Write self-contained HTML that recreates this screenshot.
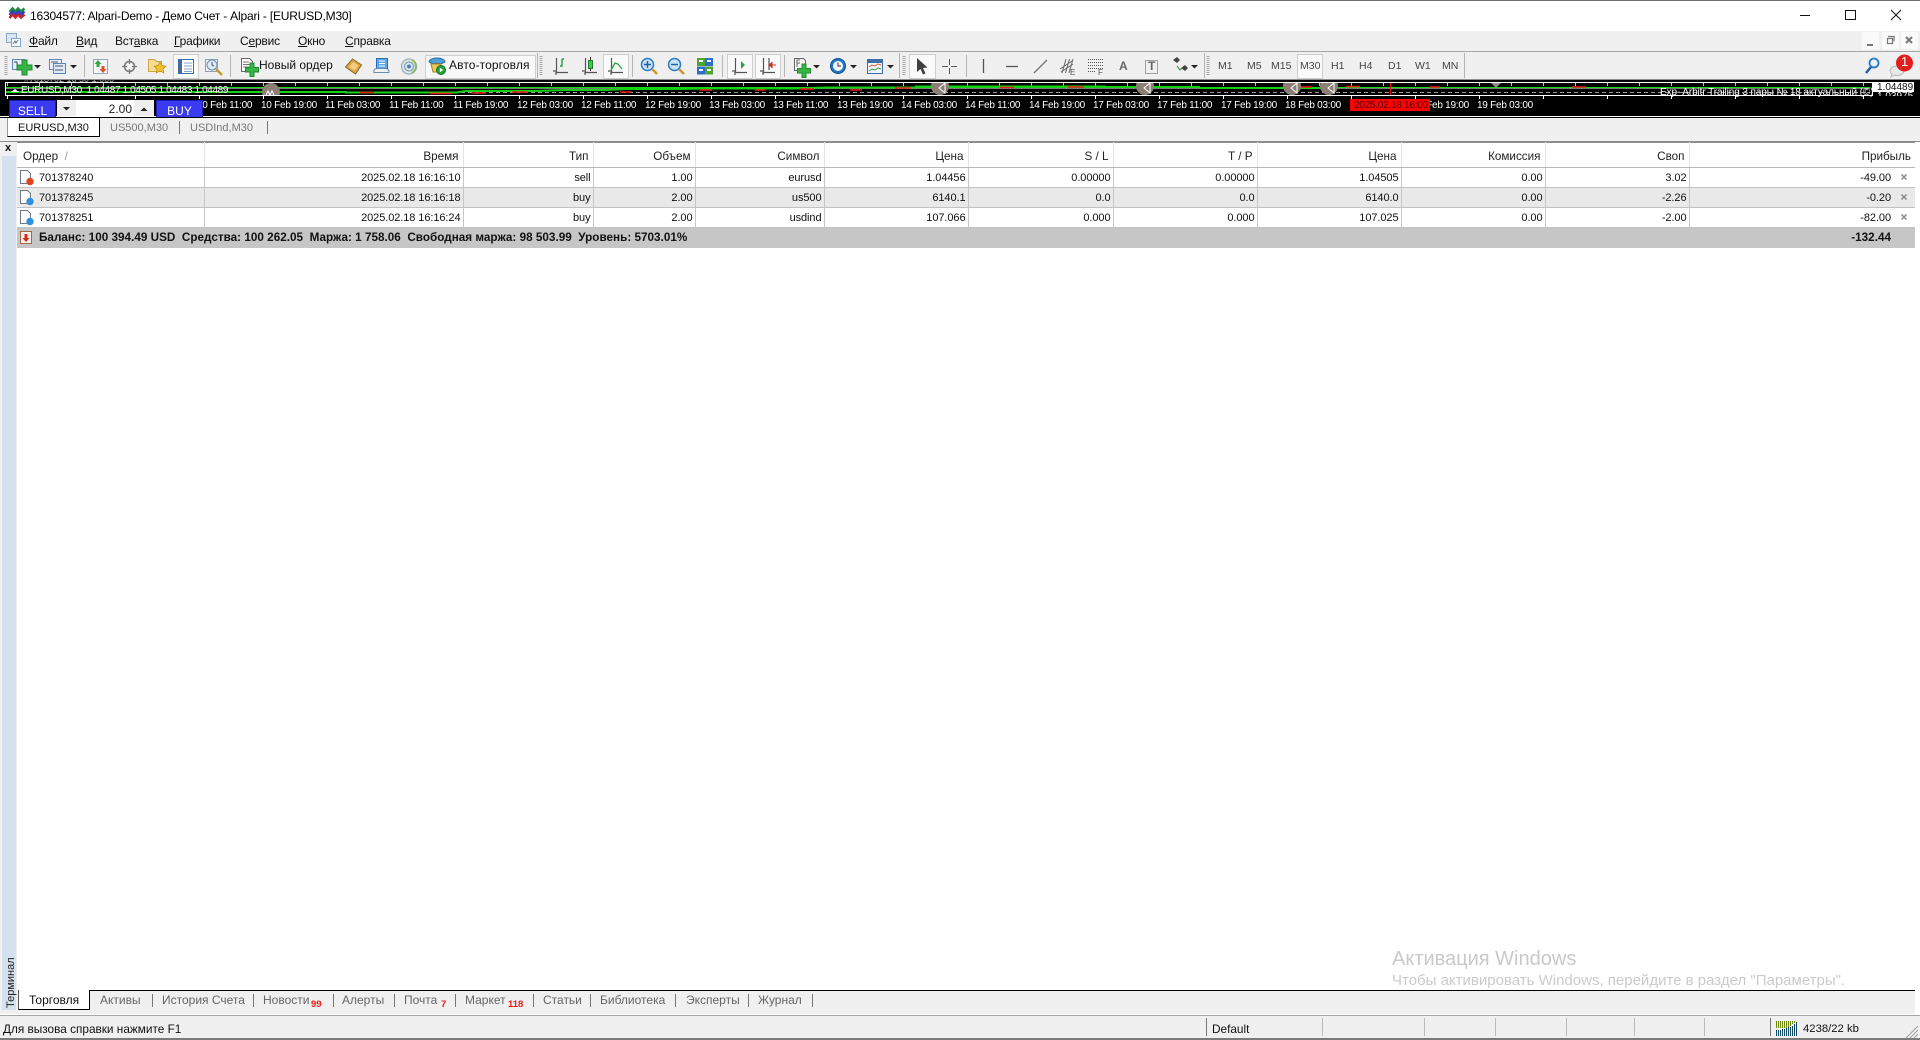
<!DOCTYPE html>
<html lang="ru"><head><meta charset="utf-8"><title>16304577: Alpari-Demo</title>
<style>
html,body{margin:0;padding:0;width:1920px;height:1040px;overflow:hidden;background:#fff;font-family:"Liberation Sans","Noto Sans CJK SC",sans-serif;font-size:11px;color:#000}
.a{position:absolute}
.t{position:absolute;white-space:nowrap;line-height:14px}
.menu .t{font-size:12px;top:34px;color:#111;letter-spacing:-.2px}
.tf .t{font-size:10.5px;top:59px;color:#444}
.ax .t{font-size:10px;top:99px;color:#fff;letter-spacing:-.25px}
.sep{position:absolute;width:1px;background:#b4b4b4}
table{position:absolute;left:17px;top:142px;border-collapse:collapse;table-layout:fixed;width:1898px;font-size:11px}
th{font-weight:400;font-size:11.7px;height:22px;padding:2px 4px 0 0;text-align:right;border-top:1px solid #8c8c8c;border-right:1px solid #e4e4e4;border-bottom:1px solid #b9b9b9;color:#222;white-space:nowrap;overflow:hidden}
td{height:19px;text-align:right;padding:0 2px 0 0;border-right:1px solid #c6c6c6;border-bottom:1px solid #c2c2c2;white-space:nowrap;overflow:hidden;color:#111;letter-spacing:-.08px}
td:first-child{text-align:left;padding-left:22px}
th:first-child{text-align:left;padding-left:6px}
tr.g td{background:#e9e9e9}
td:last-child{padding-right:24px;border-right:0}
th:last-child{border-right:0}
tr.tot td{background:#c6c6c6;font-weight:700;font-size:11.7px;height:19px;border:0;padding-right:24px;padding-bottom:1px;letter-spacing:.02px}
.bt .t{font-size:12px;top:993px;color:#666}
.bt .r{color:#f01818;font-size:9.5px;font-weight:700;top:998px}
.bs{position:absolute;top:1018px;height:18px;width:1px;background:#b9b9b9}
.tick{position:absolute;left:7px;width:1860px}
.st{font-size:11.8px;top:1022px;color:#111}
</style></head><body>

<!-- title bar -->
<div class="a" style="left:0;top:0;width:1920px;height:1px;background:#6f6f6f"></div>
<div class="t" style="left:30px;top:9px;font-size:12px;letter-spacing:-.19px">16304577: Alpari-Demo - Демо Счет - Alpari - [EURUSD,M30]</div>

<!-- menu -->
<div class="a" style="left:0;top:31px;width:1920px;height:20px;background:#f0f0f0"></div>
<div class="menu">
<div class="t" style="left:29px"><u>Ф</u>айл</div>
<div class="t" style="left:76px"><u>В</u>ид</div>
<div class="t" style="left:115px">Вст<u>а</u>вка</div>
<div class="t" style="left:174px"><u>Г</u>рафики</div>
<div class="t" style="left:240px">С<u>е</u>рвис</div>
<div class="t" style="left:298px"><u>О</u>кно</div>
<div class="t" style="left:345px"><u>С</u>правка</div>
</div>

<!-- toolbar -->
<div class="a" style="left:0;top:51px;width:1920px;height:1px;background:#a6a6a6"></div>
<div class="a" style="left:0;top:52px;width:1920px;height:27px;background:#f0f0f0"></div>
<div class="a" style="left:0;top:79px;width:1920px;height:1px;background:#8e8e8e"></div>

<div class="a" style="left:173px;top:54px;width:24px;height:23px;background:#fafafa;border:1px solid #cfcfcf"></div>
<div class="a" style="left:425px;top:55px;width:109px;height:22px;background:#f8f8f8;border:1px solid #cfcfcf"></div>
<div class="a" style="left:603px;top:54px;width:24px;height:23px;background:#fafafa;border:1px solid #cfcfcf"></div>
<div class="a" style="left:727px;top:54px;width:24px;height:23px;background:#fafafa;border:1px solid #cfcfcf"></div>
<div class="a" style="left:755px;top:54px;width:24px;height:23px;background:#fafafa;border:1px solid #cfcfcf"></div>
<div class="a" style="left:909px;top:54px;width:25px;height:23px;background:#fafafa;border:1px solid #cfcfcf"></div>
<div class="a" style="left:1297px;top:54px;width:24px;height:23px;background:#fafafa;border:1px solid #cfcfcf"></div>

<div class="sep" style="left:84px;top:55px;height:22px"></div>
<div class="sep" style="left:230px;top:55px;height:22px"></div>
<div class="sep" style="left:537px;top:53px;height:25px"></div>
<div class="sep" style="left:632px;top:55px;height:22px"></div>
<div class="sep" style="left:722px;top:55px;height:22px"></div>
<div class="sep" style="left:784px;top:55px;height:22px"></div>
<div class="sep" style="left:899px;top:53px;height:25px"></div>
<div class="sep" style="left:966px;top:55px;height:22px"></div>
<div class="sep" style="left:1204px;top:53px;height:25px"></div>
<div class="sep" style="left:1464px;top:53px;height:25px"></div>

<div class="t" style="left:259px;top:58px;font-size:12px;color:#111">Новый ордер</div>
<div class="t" style="left:449px;top:58px;font-size:12px;color:#111;letter-spacing:.1px">Авто-торговля</div>
<div class="tf">
<div class="t" style="left:1218px">M1</div>
<div class="t" style="left:1247px">M5</div>
<div class="t" style="left:1271px">M15</div>
<div class="t" style="left:1300px">M30</div>
<div class="t" style="left:1331px">H1</div>
<div class="t" style="left:1359px">H4</div>
<div class="t" style="left:1388px">D1</div>
<div class="t" style="left:1415px">W1</div>
<div class="t" style="left:1442px">MN</div>
</div>
<div class="t" style="left:1119px;top:59px;font-size:12px;font-weight:700;color:#666">A</div>
<div class="t" style="left:1148px;top:59px;font-size:12px;font-weight:700;color:#666">T</div>
<div class="t" style="left:1070px;top:66px;font-size:8px;color:#555">E</div>
<div class="t" style="left:1098px;top:66px;font-size:8px;color:#555">F</div>

<!-- MDI buttons -->
<div class="a" style="left:1862px;top:32px;width:17px;height:17px;background:#fafafa"></div>
<div class="a" style="left:1882px;top:32px;width:17px;height:17px;background:#fafafa"></div>
<div class="a" style="left:1901px;top:32px;width:17px;height:17px;background:#fafafa"></div>

<!-- chart strip -->
<div class="a" style="left:0;top:80px;width:1920px;height:38px;background:#000"></div>
<div class="a" style="left:0;top:116px;width:1920px;height:1px;background:#fff"></div>
<div class="a" style="left:5px;top:82px;width:1866px;height:12px;border:1px solid #fff"></div>
<div class="tick" style="top:83px;height:3px;background:repeating-linear-gradient(90deg,#bbb 0 1px,transparent 1px 32px)"></div>
<div class="tick" style="top:95px;height:4px;background:repeating-linear-gradient(90deg,#fff 0 1px,transparent 1px 64px)"></div>
<div class="a" style="left:24px;top:80px;height:3px;width:110px;overflow:hidden;font-size:9px;color:#bbb;line-height:9px;white-space:nowrap"><span style="position:relative;top:-5px">#7013702 16 50 1.000</span></div>

<svg class="a" style="left:0;top:0" width="1920" height="1040" viewBox="0 0 1920 1040" fill="none">
 <defs><clipPath id="fr"><rect x="6" y="83" width="1865" height="12"/></clipPath></defs>
 <!-- window controls -->
 <path d="M1800 15.500h10" stroke="#111"/>
 <rect x="1845.500" y="10.500" width="10" height="9" stroke="#111"/>
 <path d="M1891 10l10 10M1901 10l-10 10" stroke="#111"/>
 <!-- app logo -->
 <path d="M9.500 12l3-3.500 3 3 2.500-3 3 3 3.500-3" stroke="#1f8a3a" stroke-width="2.500"/>
 <path d="M9.500 15l3-3.500 3 3 2.500-3 3 3 3.500-3" stroke="#3040d0" stroke-width="2.500"/>
 <path d="M9.500 18l3-3.500 3 3 2.500-3 3 3 3.500-3" stroke="#c8242c" stroke-width="2.500"/>
 <!-- menu doc icon -->
 <rect x="6.500" y="33.500" width="10" height="9" fill="#dbe7f6" stroke="#8aa8ce"/>
 <rect x="11.500" y="38.500" width="9" height="8" fill="#fff" stroke="#7fa4d0"/>
 <path d="M13 44l2-3 1 2 2-3" stroke="#4a78b0"/>
 <!-- grips -->
 <path d="M6 56v20M541 56v20M904 56v20M1208 56v20" stroke="#a8a8a8" stroke-width="3" stroke-dasharray="1 1"/>
 <!-- new chart -->
 <rect x="12.500" y="59.500" width="12" height="10" fill="#e8f0fa" stroke="#5d86b8"/>
 <path d="M14 62h3M17 62v4M17 66h4" stroke="#445"/>
 <path d="M22 60v5h-5v5h5v5h5v-5h5v-5h-5v-5z" fill="#35b544" stroke="#1f8a2e"/>
 <path d="M34 65h7l-3.500 3.500z" fill="#222"/>
 <!-- profiles -->
 <rect x="49.500" y="59.500" width="12" height="10" fill="#e8f0fa" stroke="#5d86b8"/>
 <rect x="53.500" y="63.500" width="12" height="10" fill="#dce8f7" stroke="#5d86b8"/>
 <path d="M51 62h7M55 66h8M55 70h8" stroke="#556"/>
 <path d="M70 65h7l-3.500 3.500z" fill="#222"/>
 <!-- market watch -->
 <rect x="93.500" y="59.500" width="14" height="14" fill="#f6f8fb" stroke="#8fa9c9"/>
 <path d="M98 60l3.500 4h-2v3h-3v-3h-2z" fill="#2fa83c"/>
 <path d="M103 73l-3.500-4h2v-3h3v3h2z" fill="#e0552a"/>
 <!-- navigator -->
 <circle cx="129.500" cy="66.500" r="5" stroke="#777" stroke-width="1.500"/>
 <path d="M129.500 59v5M129.500 69v5M122 66.500h5M132 66.500h5" stroke="#777" stroke-width="1.300"/>
 <!-- folder star -->
 <path d="M148.500 59.500h6l2 2h5v10h-13z" fill="#f6dc8e" stroke="#c7a548"/>
 <path d="M160 62l2 3.500 4 .7-3 2.800.8 4-3.800-2-3.800 2 .8-4-3-2.800 4-.7z" fill="#f1c22c" stroke="#b88a15" stroke-width=".7"/>
 <!-- terminal -->
 <rect x="178.500" y="59.500" width="15" height="14" fill="#fff" stroke="#3e6da6"/>
 <rect x="179" y="60" width="3" height="13" fill="#3e6da6"/>
 <path d="M184 63h8M184 66h8M184 69h8M184 71.500h8" stroke="#87a4c7"/>
 <path d="M180 62v1M180 65.500v1M180 69v1" stroke="#e33"/>
 <!-- tester -->
 <rect x="205.500" y="59.500" width="12" height="12" fill="#eef3f8" stroke="#8c9fb5"/>
 <circle cx="212" cy="65" r="5" fill="#dcebf7" stroke="#6f8ba8"/>
 <path d="M212 62v3l2 1" stroke="#556"/>
 <path d="M216 69l6 6" stroke="#c99a2a" stroke-width="2.500"/>
 <!-- new order -->
 <path d="M241.500 58.500h8l3 3v10h-11z" fill="#fff" stroke="#666"/>
 <path d="M243 62h6M243 64.500h7M243 67h6" stroke="#777"/>
 <path d="M250 63v4.500h-4.500v4.500h4.500v4.500h4v-4.500h4.500v-4.500h-4.500v-4.500z" fill="#35b544" stroke="#1f8a2e"/>
 <!-- book -->
 <path d="M345.500 67l7-8 9 6-6 9z" fill="#d9a648" stroke="#8e6a22"/>
 <path d="M349 67l4.500-5 5 3.500-4 5z" fill="#f2cf7e"/>
 <!-- vps -->
 <rect x="376.500" y="58.500" width="11" height="11" fill="#5aa6ea" stroke="#2e70b8"/>
 <path d="M379 61h6M379 63.500h6M379 66h6" stroke="#fff"/>
 <path d="M374 72.500a3 3 0 0 1 3-4h8a3.500 3.500 0 0 1 4 4z" fill="#eef2f7" stroke="#6f8ba8"/>
 <!-- signal -->
 <circle cx="409" cy="66.500" r="7.500" fill="#dfe9ee" stroke="#97b0bd" stroke-width="1.300"/>
 <circle cx="409" cy="66.500" r="4.500" stroke="#7d9db8" stroke-width="1.200"/>
 <circle cx="409" cy="66.500" r="2" fill="#4a80b8"/>
 <path d="M412 60a7.500 7.500 0 0 1 3 10l-3 3" stroke="#86b94a" stroke-width="1.600"/>
 <!-- autotrade -->
 <path d="M429 62a8 4 0 0 1 16 0l-3 1.500h-10z" fill="#4f9fd8" stroke="#2c6a9e"/>
 <path d="M431 64h10l-1 8h-7z" fill="#eec75c" stroke="#a88420"/>
 <circle cx="441" cy="70" r="4.500" fill="#25a03a" stroke="#17752a"/>
 <path d="M439.800 67.800l3.500 2.200-3.500 2.200z" fill="#fff"/>
 <!-- chart types -->
 <path d="M556.500 58v14.500H568M553 71h3M556 75v-3" stroke="#555" stroke-width="1.200"/>
 <path d="M562 59v7h-2M562 59h2" stroke="#1fa03a" stroke-width="1.400"/>
 <path d="M585.500 58v14.500H597M582 71h3M585 75v-3" stroke="#555" stroke-width="1.200"/>
 <rect x="588.500" y="60.500" width="4" height="8" fill="#35d04a" stroke="#1f7a2e"/>
 <path d="M590.500 57v3M590.500 69v2" stroke="#333"/>
 <path d="M611.500 58v14.500H623M608 71h3M611 75v-3" stroke="#555" stroke-width="1.200"/>
 <path d="M611 70l4-7 3 1 4 5" stroke="#2aa045" stroke-width="1.300"/>
 <!-- zoom -->
 <circle cx="647.500" cy="64.500" r="6" fill="#c8e2f8" stroke="#2c7cc8" stroke-width="1.500"/>
 <path d="M644 64.500h7M647.500 61v7" stroke="#1f5fa8" stroke-width="1.500"/>
 <path d="M652 69l5 5" stroke="#c99a2a" stroke-width="2.500"/>
 <circle cx="674.500" cy="64.500" r="6" fill="#c8e2f8" stroke="#2c7cc8" stroke-width="1.500"/>
 <path d="M671 64.500h7" stroke="#1f5fa8" stroke-width="1.500"/>
 <path d="M679 69l5 5" stroke="#c99a2a" stroke-width="2.500"/>
 <!-- tile -->
 <rect x="697" y="58" width="8" height="8" fill="#4fa52f"/><rect x="705" y="58" width="8" height="8" fill="#2c70c8"/>
 <rect x="697" y="66.500" width="8" height="8" fill="#2c70c8"/><rect x="705" y="66.500" width="8" height="8" fill="#4fa52f"/>
 <path d="M699 61h4M707 61h4M699 70h4M707 70h4" stroke="#fff" stroke-width="2"/>
 <!-- autoscroll / shift -->
 <path d="M735.500 58v14.500H747M732 71h3M735 75v-3" stroke="#555" stroke-width="1.200"/>
 <path d="M741 61l4 4-4 4z" fill="#2aa045"/>
 <path d="M763.500 58v14.500H775M760 71h3M763 75v-3M769 58v12" stroke="#555" stroke-width="1.200"/>
 <path d="M771 65h5M772 62.500l-3 2.500 3 2.500z" stroke="#c8342c" fill="#c8342c"/>
 <!-- add indicator -->
 <path d="M794.500 58.500h9l2 2v10h-11z" fill="#f6f6f6" stroke="#666"/>
 <path d="M797 63v-3h3M800 63h-3v4" stroke="#666"/>
 <path d="M802 64v4.500h-4.500v4.500h4.500v4.500h4v-4.500h4.500v-4.500h-4.500v-4.500z" fill="#35b544" stroke="#1f8a2e"/>
 <path d="M813 65h7l-3.500 3.500z" fill="#222"/>
 <!-- clock -->
 <circle cx="838" cy="66" r="7.500" fill="#1f78c8" stroke="#124f8e"/>
 <circle cx="838" cy="66" r="5" fill="#f4f7fa"/>
 <path d="M838 62.500v3.500h3" stroke="#333"/>
 <path d="M850 65h7l-3.500 3.500z" fill="#222"/>
 <!-- template -->
 <rect x="867.500" y="59.500" width="15" height="14" fill="#eef4fb" stroke="#3e6da6"/>
 <rect x="868" y="60" width="14" height="3" fill="#3e6da6"/>
 <path d="M869 67l3-2 3 1 3-2 3 1" stroke="#d85a2a"/>
 <path d="M869 71l3-2 3 1 3-2 3 1" stroke="#3a9a3a"/>
 <path d="M887 65h7l-3.500 3.500z" fill="#222"/>
 <!-- cursor -->
 <path d="M917 58v14l3.500-3 2.500 5.500 2.500-1-2.500-5.500 4.500-.5z" fill="#3f3f3f"/>
 <!-- crosshair -->
 <path d="M949.500 59v6M949.500 68v6M942 66.500h6M951 66.500h6" stroke="#555"/>
 <!-- lines -->
 <path d="M983.500 59v14" stroke="#555" stroke-width="1.300"/>
 <path d="M1006 66.500h12" stroke="#555" stroke-width="1.300"/>
 <path d="M1034 73l13-13" stroke="#777" stroke-width="1.300"/>
 <path d="M1060 69l12-8M1061 72l12-8M1066 59l-4 14M1069.500 59l-4 14M1073 59l-4 14" stroke="#666"/>
 <path d="M1088 59.500h15M1088 62.500h15M1088 65.500h15M1088 68.500h15M1088 71.500h7" stroke="#555" stroke-dasharray="1 1"/>
 <path d="M1145.500 60.500h12v13h-12z" stroke="#555" stroke-dasharray="1 1"/>
 <path d="M1173 60l4-3 3 3-3 3z M1181 68l4-3 3 3-3 3z" fill="#444"/>
 <path d="M1177 66l3 4 2-2" stroke="#2a8a3a"/>
 <path d="M1191 65h7l-3.500 3.500z" fill="#222"/>
 <!-- search -->
 <circle cx="1874" cy="63" r="4.500" stroke="#2c78c8" stroke-width="1.800" fill="#e8f2fb"/>
 <path d="M1871 67l-5 6" stroke="#1f5fa8" stroke-width="2.500"/>
 <!-- chat + badge -->
 <path d="M1890 71a7 5 0 0 1 14 0 7 5 0 0 1-10 4l-3 2 1-3a5 5 0 0 1-2-3z" fill="#e8e8e8" stroke="#bbb"/>
 <circle cx="1904.500" cy="63" r="8.500" fill="#e01f1f"/>
 <!-- MDI -->
 <path d="M1867 45h6" stroke="#777" stroke-width="2"/>
 <path d="M1888 36.500h6v5M1887.500 38.500h5v5h-5z" stroke="#777" stroke-width="1.200"/>
 <path d="M1906 37l6 6M1912 37l-6 6" stroke="#777" stroke-width="2"/>

 <!-- chart series -->
 <g clip-path="url(#fr)">
 <path d="M6 88.500H1870" stroke="#7b7b7b"/>
 <path d="M6 92.500H1870" stroke="#9a9a9a" stroke-dasharray="4 3"/>
 <path d="M6 87.500H1870" stroke="#16d916"/>
 <path d="M6 92h160M166 92h180v.5h110l10-1.500h70l30-1h40l20-1h40l50-.5h80l30-1h90v-1h190" stroke="#12d012" stroke-width="2"/>
 <path d="M1000 87h200M1200 88h120" stroke="#12d012" stroke-width="2"/>
 <path d="M360 92.500h14M430 93.500h22M472 93h14M512 92h16M620 92h12M700 90h12M755 90h10M800 89h14M850 90h12M895 88h16M1000 87.500h14M1068 87h16M1300 87h12M1346 86.500h14M1430 87h10M1572 87h14" stroke="#f01a1a" stroke-width="1.500"/>
 <path d="M1390.500 83v12" stroke="#e01010"/>
 <g fill="#8b7f76"><circle cx="271" cy="92" r="9"/><circle cx="940" cy="86" r="9"/><circle cx="1145" cy="86" r="9"/><circle cx="1292" cy="86" r="9"/><circle cx="1329" cy="86" r="9"/></g>
 <path d="M1491 83h10l-5 5z" fill="#8b8b8b"/>
 <path d="M945 83l-6 5 6 5zM1150 83l-6 5 6 5zM1297 83l-6 5 6 5zM1334 83l-6 5 6 5z" stroke="#fff" stroke-width="1"/>
 <path d="M266 95l2-4 2 4 2-4 2 4" stroke="#fff"/>
 </g>
 <path d="M11 92l4-3 4 3z" fill="#fff"/>

 <!-- tab arrows -->
 <path d="M1891 123v8l-4-4zM1907 123v8l4-4z" fill="#9a9a9a"/>
</svg>

<div class="t" style="left:1901px;top:55px;font-size:13px;color:#fff">1</div>

<!-- chart text -->
<div class="t" style="left:21px;top:84px;font-size:10px;color:#fff;letter-spacing:-.37px">EURUSD,M30&nbsp; 1.04487 1.04505 1.04483 1.04489</div>
<div class="t" style="left:1660px;top:86px;font-size:10px;color:#fff;letter-spacing:-.1px">Exp- Arbitr Trailing 3 пары № 18 актуальный (©)</div>
<div class="a" style="left:1877px;top:92px;width:36px;height:4px;overflow:hidden;font-size:10px;line-height:10px;color:#fff">1.03975</div>
<div class="a" style="left:1873px;top:82px;width:41px;height:10px;background:#fff"></div>
<div class="t" style="left:1877px;top:81px;font-size:10px;color:#111">1.04489</div>

<div class="ax">
<div class="t" style="left:202px;width:54px;overflow:hidden;text-indent:-5px">10 Feb 11:00</div>
<div class="t" style="left:261px">10 Feb 19:00</div>
<div class="t" style="left:325px">11 Feb 03:00</div>
<div class="t" style="left:389px">11 Feb 11:00</div>
<div class="t" style="left:453px">11 Feb 19:00</div>
<div class="t" style="left:517px">12 Feb 03:00</div>
<div class="t" style="left:581px">12 Feb 11:00</div>
<div class="t" style="left:645px">12 Feb 19:00</div>
<div class="t" style="left:709px">13 Feb 03:00</div>
<div class="t" style="left:773px">13 Feb 11:00</div>
<div class="t" style="left:837px">13 Feb 19:00</div>
<div class="t" style="left:901px">14 Feb 03:00</div>
<div class="t" style="left:965px">14 Feb 11:00</div>
<div class="t" style="left:1029px">14 Feb 19:00</div>
<div class="t" style="left:1093px">17 Feb 03:00</div>
<div class="t" style="left:1157px">17 Feb 11:00</div>
<div class="t" style="left:1221px">17 Feb 19:00</div>
<div class="t" style="left:1285px">18 Feb 03:00</div>
<div class="t" style="left:1413px">18 Feb 19:00</div>
<div class="t" style="left:1477px">19 Feb 03:00</div>
<div class="a" style="left:1350px;top:99px;width:80px;height:12px;background:#f00"></div>
<div class="t" style="left:1354px;color:#400">2025.02.18 16:00</div>
</div>

<!-- one-click trading -->
<div class="a" style="left:9px;top:100px;width:45px;height:16px;background:#3a3af0;border:1px solid #1c1cb0;border-bottom:0;overflow:hidden;text-align:center;color:#fff;font-size:12px;line-height:20px">SELL</div>
<div class="a" style="left:57px;top:100px;width:19px;height:16px;background:#efefef"></div>
<div class="a" style="left:76px;top:100px;width:58px;height:16px;background:#fff;text-align:right;font-size:12px;line-height:19px;color:#222"><span style="padding-right:2px">2.00</span></div>
<div class="a" style="left:134px;top:100px;width:20px;height:16px;background:#efefef"></div>
<div class="a" style="left:156px;top:100px;width:45px;height:16px;background:#3a3af0;border:1px solid #1c1cb0;border-bottom:0;overflow:hidden;text-align:center;color:#fff;font-size:12px;line-height:20px">BUY</div>
<svg class="a" style="left:0;top:100px" width="160" height="17"><path d="M63 7h7l-3.500 3.500z" fill="#222"/><path d="M140.500 11h7L144 7.500z" fill="#222"/></svg>

<!-- chart tabs -->
<div class="a" style="left:0;top:118px;width:1920px;height:24px;background:#f0f0f0"></div>
<div class="a" style="left:0;top:141px;width:1920px;height:1px;background:#8c8c8c"></div>
<div class="a" style="left:7px;top:118px;width:91px;height:18px;background:#fff;border-right:1px solid #000;border-bottom:1px solid #000;border-left:1px solid #999"></div>
<div class="t" style="left:18px;top:121px;color:#111">EURUSD,M30</div>
<div class="t" style="left:110px;top:121px;color:#777">US500,M30</div>
<div class="a" style="left:179px;top:121px;width:1px;height:13px;background:#777"></div>
<div class="t" style="left:190px;top:121px;color:#777">USDInd,M30</div>
<div class="a" style="left:267px;top:121px;width:1px;height:13px;background:#777"></div>

<!-- terminal gutter -->
<div class="a" style="left:0;top:142px;width:17px;height:873px;background:#f0f0f0"></div>
<div class="a" style="left:2px;top:156px;width:14px;height:854px;background:#d5e1ee"></div>
<div class="t" style="left:5px;top:141px;font-size:11px;font-weight:700;color:#111">x</div>
<div class="t" style="left:-14px;top:976px;width:50px;font-size:11px;color:#222;transform:rotate(-90deg);text-align:left;height:14px;line-height:14px">Терминал</div>

<!-- trade table -->
<table>
<colgroup><col style="width:187px"><col style="width:259px"><col style="width:130px"><col style="width:102px"><col style="width:129px"><col style="width:144px"><col style="width:145px"><col style="width:144px"><col style="width:144px"><col style="width:144px"><col style="width:144px"><col style="width:226px"></colgroup>
<tr><th>Ордер &nbsp;<span style="color:#999">/</span></th><th>Время</th><th>Тип</th><th>Объем</th><th>Символ</th><th>Цена</th><th>S / L</th><th>T / P</th><th>Цена</th><th>Комиссия</th><th>Своп</th><th>Прибыль</th></tr>
<tr><td>701378240</td><td>2025.02.18 16:16:10</td><td>sell</td><td>1.00</td><td>eurusd</td><td>1.04456</td><td>0.00000</td><td>0.00000</td><td>1.04505</td><td>0.00</td><td>3.02</td><td>-49.00</td></tr>
<tr class="g"><td>701378245</td><td>2025.02.18 16:16:18</td><td>buy</td><td>2.00</td><td>us500</td><td>6140.1</td><td>0.0</td><td>0.0</td><td>6140.0</td><td>0.00</td><td>-2.26</td><td>-0.20</td></tr>
<tr><td>701378251</td><td>2025.02.18 16:16:24</td><td>buy</td><td>2.00</td><td>usdind</td><td>107.066</td><td>0.000</td><td>0.000</td><td>107.025</td><td>0.00</td><td>-2.00</td><td>-82.00</td></tr>
<tr class="tot"><td colspan="11">Баланс: 100 394.49 USD&nbsp; Средства: 100 262.05&nbsp; Маржа: 1 758.06&nbsp; Свободная маржа: 98 503.99&nbsp; Уровень: 5703.01%</td><td>-132.44</td></tr>
</table>

<svg class="a" style="left:0;top:160px" width="1920" height="95" viewBox="0 160 1920 95" fill="none">
 <g stroke="#6f7a88" fill="#fff"><path d="M20.500 170.500h7l3 3v10h-10z"/><path d="M20.500 190.500h7l3 3v10h-10z"/><path d="M20.500 210.500h7l3 3v10h-10z"/></g>
 <circle cx="30" cy="181.500" r="3.700" fill="#e0421e"/><circle cx="30" cy="201.500" r="3.700" fill="#2f8fe0"/><circle cx="30" cy="221.500" r="3.700" fill="#2f8fe0"/>
 <path d="M1901.500 174.500l5 5M1906.500 174.500l-5 5M1901.500 194.500l5 5M1906.500 194.500l-5 5M1901.500 214.500l5 5M1906.500 214.500l-5 5" stroke="#888" stroke-width="1.500"/>
 <rect x="20.500" y="231.500" width="11" height="12" fill="#f6f0ea" stroke="#a26a4a"/>
 <path d="M24.500 234h3v4h2l-3.500 4-3.500-4h2z" fill="#d8281c"/>
</svg>

<!-- watermark -->
<div class="t" style="left:1392px;top:948px;font-size:20px;line-height:22px;color:#c9c9c9">Активация Windows</div>
<div class="t" style="left:1392px;top:973px;font-size:15px;line-height:16px;color:#cbcbcb">Чтобы активировать Windows, перейдите в раздел "Параметры".</div>

<!-- bottom tabs -->
<div class="a" style="left:17px;top:990px;width:1898px;height:25px;background:#f0f0f0"></div>
<div class="a" style="left:89px;top:990px;width:1826px;height:1px;background:#000"></div>
<div class="a" style="left:18px;top:990px;width:70px;height:19px;background:#fff;border-left:1px solid #555;border-right:1px solid #000;border-bottom:1px solid #000"></div>
<div class="bt">
<div class="t" style="left:29px;color:#111">Торговля</div>
<div class="t" style="left:100px">Активы</div>
<div class="t" style="left:162px">История Счета</div>
<div class="t" style="left:263px">Новости</div><div class="t r" style="left:311px">99</div>
<div class="t" style="left:342px">Алерты</div>
<div class="t" style="left:404px">Почта</div><div class="t r" style="left:441px">7</div>
<div class="t" style="left:465px">Маркет</div><div class="t r" style="left:508px">118</div>
<div class="t" style="left:543px">Статьи</div>
<div class="t" style="left:600px">Библиотека</div>
<div class="t" style="left:686px">Эксперты</div>
<div class="t" style="left:758px">Журнал</div>
</div>
<div class="a" style="left:152px;top:994px;width:1px;height:13px;background:#777"></div>
<div class="a" style="left:253px;top:994px;width:1px;height:13px;background:#777"></div>
<div class="a" style="left:333px;top:994px;width:1px;height:13px;background:#777"></div>
<div class="a" style="left:394px;top:994px;width:1px;height:13px;background:#777"></div>
<div class="a" style="left:455px;top:994px;width:1px;height:13px;background:#777"></div>
<div class="a" style="left:533px;top:994px;width:1px;height:13px;background:#777"></div>
<div class="a" style="left:590px;top:994px;width:1px;height:13px;background:#777"></div>
<div class="a" style="left:675px;top:994px;width:1px;height:13px;background:#777"></div>
<div class="a" style="left:748px;top:994px;width:1px;height:13px;background:#777"></div>
<div class="a" style="left:812px;top:994px;width:1px;height:13px;background:#777"></div>

<!-- status bar -->
<div class="a" style="left:0;top:1014px;width:1920px;height:1px;background:#fff"></div>
<div class="a" style="left:0;top:1015px;width:1920px;height:1px;background:#a6a6a6"></div>
<div class="a" style="left:0;top:1016px;width:1920px;height:22px;background:#f0f0f0"></div>
<div class="a" style="left:0;top:1038px;width:1920px;height:2px;background:#7a7a7a"></div>
<div class="t st" style="left:3px">Для вызова справки нажмите F1</div>
<div class="bs" style="left:1206px;background:#777"></div>
<div class="t st" style="left:1212px">Default</div>
<div class="bs" style="left:1322px"></div>
<div class="bs" style="left:1424px"></div>
<div class="bs" style="left:1495px"></div>
<div class="bs" style="left:1566px"></div>
<div class="bs" style="left:1634px"></div>
<div class="bs" style="left:1704px"></div>
<div class="bs" style="left:1770px;background:#777"></div>
<div class="t st" style="left:1803px;font-size:11.3px">4238/22 kb</div>
<svg class="a" style="left:1770px;top:1014px" width="150" height="26" fill="none"><path d="M6.500 14V7M8.500 14V7M10.500 14V7M12.500 14V7M14.500 14V7M16.500 14V7M18.500 14V7M20.500 12V7M22.500 10V7M24.500 9V7" stroke="#6f8a10"/><path d="M6.500 22v-6M8.500 22v-6M10.500 22v-6M12.500 22v-7M14.500 22v-7M16.500 22v-8M18.500 22v-9M20.500 22v-9M22.500 22v-10M24.500 22v-12M26.500 22V8" stroke="#0f4a62"/><path d="M136 24l12-12M140 24l8-8M144 24l4-4" stroke="#a0a0a0"/></svg>
</body></html>
